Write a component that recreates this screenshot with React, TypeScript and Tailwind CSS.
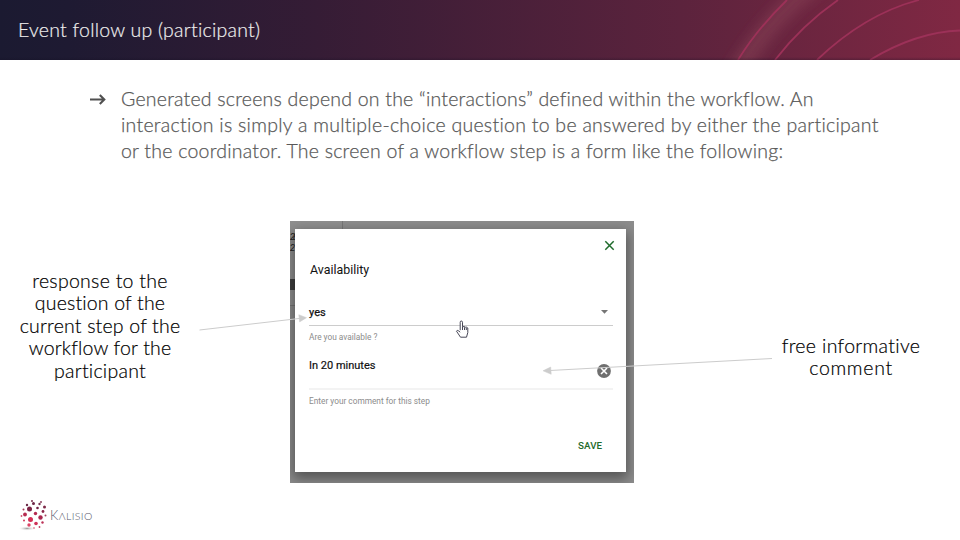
import React from "react";

function Header() {
  return (
    <header className="relative flex h-[60px] items-center overflow-hidden bg-[linear-gradient(90deg,#1b1a31_0%,#1e1a32_7%,#351c35_33%,#5c233d_71%,#802843_100%)] pl-[18px]">
      <svg className="absolute inset-0" width="960" height="60" viewBox="0 0 960 60" fill="none">
        <defs>
          <filter id="glow" x="-50%" y="-50%" width="200%" height="200%">
            <feGaussianBlur stdDeviation="6" />
          </filter>
          <linearGradient id="edge" x1="0" y1="0" x2="0" y2="1">
            <stop offset="0.95" stopColor="#100c20" stopOpacity="0" />
            <stop offset="1" stopColor="#100c20" stopOpacity="0.25" />
          </linearGradient>
        </defs>
        <path d="M733 80Q764 22 818 -18" stroke="#8a4055" strokeOpacity="0.5" strokeWidth="20" filter="url(#glow)" />
        <g stroke="#9c3158" strokeWidth="1.8">
          <path d="M738 60Q757 29 787 0" />
          <path d="M775 60Q802 25 838 0" />
          <path d="M817 60Q865 14 919 0" />
          <path d="M870 60Q916 32 960 30.500" />
        </g>
        <rect width="960" height="60" fill="url(#edge)" />
      </svg>
      <h1 className="relative whitespace-nowrap text-[19.500px] font-light leading-6 text-[#eeeeee] [-webkit-text-stroke:0.2px]">
        <span className="tracking-[0.250px]">Event follow up (participant)</span>
      </h1>
    </header>
  );
}

function Intro() {
  return (
    <section className="flex h-[161px] pl-[89px] pt-[26px] text-[#595959]">
      <svg className="mt-[7px] shrink-0" width="18" height="14" viewBox="0 0 18 14" fill="none" stroke="#505050" strokeWidth="2.1">
        <path d="M1 6.500H15M10.800 2L15.300 6.500L10.800 11" />
      </svg>
      <div className="ml-[14px] flex flex-col items-start whitespace-nowrap text-[19.500px] font-light leading-[26px] [-webkit-text-stroke:0.25px]">
        <span className="tracking-[0.220px]">Generated screens depend on the “interactions” defined within the workflow. An</span>
        <span className="tracking-[0.275px]">interaction is simply a multiple-choice question to be answered by either the participant</span>
        <span className="tracking-[0.235px]">or the coordinator. The screen of a workflow step is a form like the following:</span>
      </div>
    </section>
  );
}

function Dialog() {
  return (
    <div className="relative h-[262px] w-[344px] shrink-0 overflow-hidden bg-[#8d8d8d] pl-[5px] pt-2 font-[Roboto,sans-serif]">
      <div className="absolute left-0 top-0 h-[85px] w-[53px] border-b border-r border-[#777777] bg-[#8f8f8f] text-[9px] italic leading-[11px] text-[#222222]">
        <div className="mt-[11px] tracking-[-2px]">28</div>
        <div>2</div>
        <div className="mt-[25px] h-[11px] bg-[#3f3f3f]" />
      </div>
      <div className="relative flex h-[243px] w-[331px] flex-col bg-white pl-[14px] pr-[13px] shadow-[0_5px_12px_2px_rgba(0,0,0,0.4)]">
        <svg className="ml-auto mr-[-2px] mt-[11px] shrink-0" width="11" height="11" viewBox="0 0 11 11" stroke="#1f6b2c" strokeWidth="1.5">
          <path d="M1.300 1.300L9.700 9.700M9.700 1.300L1.300 9.700" />
        </svg>
        <h2 className="mt-[11px] whitespace-nowrap pl-px text-[12.400px] leading-4 text-[#111111]">Availability</h2>
        <div className="mt-[22px] flex h-[26px] items-start justify-between border-b border-[#cccccc] pt-[6px] text-[11px] leading-[14px] text-[#111111]">
          <span className="[-webkit-text-stroke:0.25px]">yes</span>
          <svg className="mr-[5px] mt-[4px]" width="7" height="4" viewBox="0 0 7 4" fill="#757575">
            <path d="M0 0H7L3.500 3.800Z" />
          </svg>
        </div>
        <p className="mt-[6px] whitespace-nowrap text-[8.300px] leading-[10px] text-[#8c8c8c]">Are you available ?</p>
        <div className="mt-[13px] flex h-[35px] items-start justify-between border-b-2 border-[#f3f3f3] pt-[3px] text-[11px] leading-[22px] text-[#111111]">
          <span className="leading-4 [-webkit-text-stroke:0.2px]">In 20 minutes</span>
          <svg className="mr-[2px] mt-[6px]" width="14" height="14" viewBox="0 0 14 14">
            <circle cx="7" cy="7" r="6.900" fill="#6f6f6f" />
            <path d="M4 4L10 10M10 4L4 10" stroke="#ffffff" strokeWidth="1.600" />
          </svg>
        </div>
        <p className="mt-[6px] whitespace-nowrap text-[8.300px] leading-[10px] text-[#8c8c8c]">Enter your comment for this step</p>
        <span className="mt-[33px] self-end pr-[11px] text-[9.800px] font-medium leading-[14px] text-[#1f6b2c]">SAVE</span>
      </div>
    </div>
  );
}

const dots = [
  [31, 502, 1, "#7b3150"], [40, 503, 1, "#8c4560"], [26, 506, 1.2, "#6b2b49"], [32.500, 504.500, 1.500, "#6b2445"], [38.500, 505, 1.200, "#74304c"],
  [43.500, 508, 1.500, "#7d2a48"], [28.500, 510, 2.500, "#7d2446"], [36.500, 509, 1.300, "#6f2045"], [22.500, 510.500, 1, "#a33a58"], [42, 512.500, 1.400, "#8a2549"],
  [24, 515.500, 1.900, "#b62c50"], [34.500, 514.500, 1.700, "#b52a50"], [20.500, 517, 0.900, "#cf5470"], [39.500, 518.500, 2.200, "#a8264e"], [29.500, 520.500, 2.500, "#d52f55"],
  [23, 521.500, 1, "#d3395b"], [44.500, 516.500, 1, "#a44360"], [35, 524.500, 1.800, "#cf3158"], [41.500, 523.500, 1.200, "#bb2f54"], [28, 526, 1.700, "#dc4465"],
  [33, 529, 0.800, "#dc4465"], [38.500, 528, 0.900, "#c33e5f"],
] as const;

function Logo() {
  return (
    <footer className="flex h-[57px] items-center pl-[18px] pt-[7px]">
      <svg width="30" height="34" viewBox="17 499 30 34">
        <defs>
          <radialGradient id="ground">
            <stop offset="0" stopColor="#999999" />
            <stop offset="1" stopColor="#ffffff" stopOpacity="0" />
          </radialGradient>
        </defs>
        <ellipse cx="26" cy="529.500" rx="9" ry="2.300" fill="url(#ground)" />
        {dots.map(([x, y, r, c]) => (
          <circle key={`${x}-${y}`} cx={x} cy={y} r={r} fill={c} />
        ))}
      </svg>
      <span className="ml-[2px] text-[13px] font-light leading-4 tracking-[0.400px] text-[#55556a]">
        K<span className="text-[10.500px]">ΛLISIO</span>
      </span>
    </footer>
  );
}

function Arrows() {
  return (
    <svg className="pointer-events-none absolute inset-0" width="960" height="540" viewBox="0 0 960 540" fill="#cccccc" stroke="#cccccc">
      <path d="M199.500 330L300 318.400M772 358.500L550 370.500" fill="none" />
      <path d="M298.800 314.700L306.500 317.700L299.600 321.900Z" strokeWidth="0.500" />
      <path d="M550.700 367L543 370.800L551.200 374.300Z" strokeWidth="0.500" />
      <path
        d="M460.200 330.200V322.300Q460.200 321 461.300 321T462.500 322.300V326.800L464 326.500L465.400 327.200L466.700 327.200L467.800 328V332.500L466.500 337.200H460.500L456.500 331.200Q457 329.500 458.800 331L460.200 332.200M462.500 327V330M464.500 327.300V330M466.300 327.800V330"
        fill="#ffffff"
        stroke="#333344"
        strokeWidth="0.900"
      />
    </svg>
  );
}

export default function App() {
  return (
    <main className="relative h-[540px] w-[960px] overflow-hidden bg-white font-[Lato,sans-serif]">
      <Header />
      <Intro />
      <section className="flex h-[262px] items-start">
        <p className="mt-[49px] flex w-[200px] flex-col items-center whitespace-nowrap text-[19.500px] font-light leading-[22.400px] text-black [-webkit-text-stroke:0.2px]">
          <span className="tracking-[0.270px]">response to the</span>
          <span className="tracking-[0.170px]">question of the</span>
          <span className="tracking-[0.190px]">current step of the</span>
          <span className="tracking-[0.170px]">workflow for the</span>
          <span className="tracking-[0.260px]">participant</span>
        </p>
        <div className="w-[90px]" />
        <Dialog />
        <p className="ml-[118px] mt-[114px] flex w-[198px] flex-col items-center whitespace-nowrap text-[19.500px] font-light leading-[22.400px] text-black [-webkit-text-stroke:0.2px]">
          <span className="tracking-[0.330px]">free informative</span>
          <span className="tracking-[0.700px]">comment</span>
        </p>
      </section>
      <Logo />
      <Arrows />
    </main>
  );
}
